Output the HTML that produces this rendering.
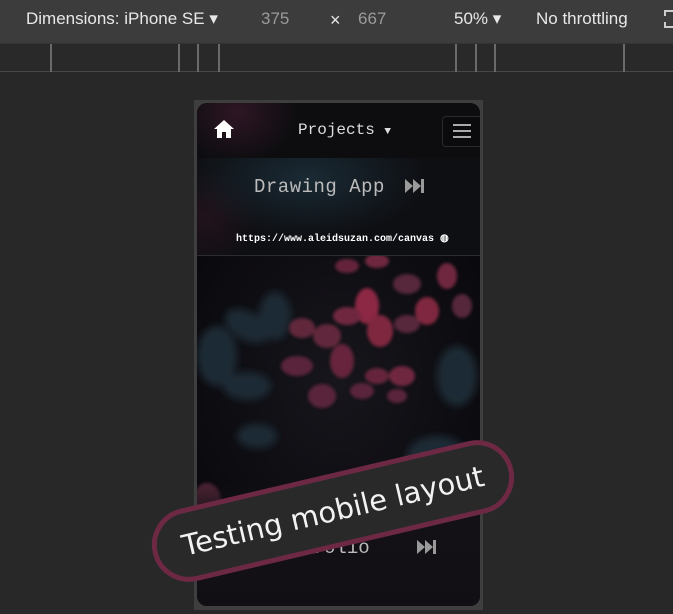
<!DOCTYPE html>
<html><head><meta charset="utf-8"><style>
*{margin:0;padding:0;box-sizing:border-box}
body{width:673px;height:614px;background:#282828;overflow:hidden;position:relative;font-family:"Liberation Sans",sans-serif}
.tb{position:absolute;left:0;top:0;width:673px;height:43px;background:#3c3c3c;color:#e8e8e8;font-size:17px}
.tb span{position:absolute;top:9px}
.ru{position:absolute;left:0;top:43px;width:673px;height:29px;background:#292929;border-top:1px solid #333;border-bottom:1px solid #474747}
.tk{position:absolute;top:0;width:2px;height:28px;background:#6a6a6a}
.frame{position:absolute;left:194px;top:100px;width:289px;height:510px;background:#3e3e3e}
.scr{position:absolute;left:197px;top:103px;width:283px;height:503px;border-radius:10px;overflow:hidden;background:#0b0a0e}
.mono{font-family:"Liberation Mono",monospace}
</style></head><body>
<div class="tb">
<span style="left:26px">Dimensions: iPhone SE ▾</span>
<span style="left:261px;color:#9a9a9a">375</span>
<span style="left:330px;font-size:18px;top:10px">×</span>
<span style="left:358px;color:#9a9a9a">667</span>
<span style="left:454px">50% ▾</span>
<span style="left:536px">No throttling</span>
<span style="left:664px;top:10px;width:12px;height:18px;border:2px dashed #ccc"></span>
</div>
<div class="ru">
<div class="tk" style="left:50px"></div><div class="tk" style="left:178px"></div><div class="tk" style="left:197px"></div><div class="tk" style="left:218px"></div>
<div class="tk" style="left:455px"></div><div class="tk" style="left:475px"></div><div class="tk" style="left:494px"></div><div class="tk" style="left:623px"></div>
</div>
<div class="frame"></div>
<div class="scr">
<div style="position:absolute;left:0;top:0;width:283px;height:55px;background:radial-gradient(ellipse 60px 50px at 40px 10px,#2e1624,transparent),#0d0d10"></div>
<div style="position:absolute;left:0;top:55px;width:283px;height:97px;background:radial-gradient(ellipse 120px 60px at 110px 20px,#1a2a34,transparent),radial-gradient(ellipse 50px 50px at 10px 60px,#22121c,transparent),#0e0f13"></div>
<svg style="position:absolute;left:16px;top:16px" width="22" height="20" viewBox="0 0 22 20"><path d="M11 1L1 10h3v9h5v-6h4v6h5v-9h3z" fill="#fff"/></svg>
<div style="position:absolute;left:101px;top:18px;color:#ddd;font-size:16px" class="mono">Projects <span style="font-size:11px">▼</span></div>
<div style="position:absolute;left:245px;top:13px;width:45px;height:31px;border:1px solid #2a2a2e;border-radius:4px;background:#0b0b0d"></div>
<div style="position:absolute;left:256px;top:21px;width:18px;height:2px;background:#aaa;box-shadow:0 6px 0 #aaa,0 12px 0 #aaa"></div>
<div class="mono" style="position:absolute;left:57px;top:73px;color:#bbb;font-size:19px;letter-spacing:0.5px">Drawing App</div>
<svg style="position:absolute;left:208px;top:76px" width="20" height="14" viewBox="0 0 20 14"><path d="M0 0l8 7-8 7zM8 0l8 7-8 7zM16 0h3v14h-3z" fill="#9a9a9a"/></svg>
<div class="mono" style="position:absolute;left:39px;top:130px;color:#fff;font-size:10px;font-weight:bold">https://www.aleidsuzan.com/canvas ◍</div>
<div style="position:absolute;left:0;top:152px;width:283px;height:1px;background:#2b2b30"></div>
<svg style="position:absolute;left:0;top:153px" width="283" height="350" viewBox="0 0 283 350">
<defs><radialGradient id="g" cx="0.5" cy="0.35" r="0.6"><stop offset="0" stop-color="#17161c"/><stop offset="1" stop-color="#0a090d"/></radialGradient><filter id="b"><feGaussianBlur stdDeviation="1.5"/></filter><filter id="b2"><feGaussianBlur stdDeviation="4"/></filter></defs>
<rect width="283" height="350" fill="url(#g)"/>
<g fill="#1f2c36" filter="url(#b2)"><ellipse cx="50" cy="70" rx="24" ry="14" transform="rotate(30 50 70)"/><ellipse cx="78" cy="60" rx="16" ry="24"/><ellipse cx="50" cy="130" rx="24" ry="14"/><ellipse cx="60" cy="180" rx="20" ry="12"/><ellipse cx="240" cy="200" rx="30" ry="20"/><ellipse cx="20" cy="100" rx="20" ry="30"/><ellipse cx="260" cy="120" rx="20" ry="30"/></g>
<g fill="#7a2a45" filter="url(#b)" opacity="0.9"><ellipse cx="170" cy="50" rx="12" ry="18" fill="#9a2b48"/><ellipse cx="150" cy="60" rx="14" ry="9"/><ellipse cx="183" cy="75" rx="13" ry="16" fill="#8c2a45"/><ellipse cx="130" cy="80" rx="14" ry="12" fill="#6a2a40"/><ellipse cx="105" cy="72" rx="13" ry="10" fill="#6a2a40"/><ellipse cx="145" cy="105" rx="12" ry="17" fill="#70283f"/><ellipse cx="100" cy="110" rx="16" ry="10" fill="#622840"/><ellipse cx="125" cy="140" rx="14" ry="12" fill="#622840"/><ellipse cx="180" cy="120" rx="12" ry="8" fill="#6e283f"/><ellipse cx="205" cy="120" rx="13" ry="10" fill="#7a2a45"/><ellipse cx="230" cy="55" rx="12" ry="14" fill="#8c2a45"/><ellipse cx="210" cy="68" rx="13" ry="9" fill="#5e2a40"/><ellipse cx="210" cy="28" rx="14" ry="10" fill="#5e2a40"/><ellipse cx="250" cy="20" rx="10" ry="13"/><ellipse cx="180" cy="5" rx="12" ry="7"/><ellipse cx="150" cy="10" rx="12" ry="7" fill="#6e283f"/><ellipse cx="265" cy="50" rx="10" ry="12" fill="#5e2a40"/><ellipse cx="200" cy="140" rx="10" ry="7" fill="#622840"/><ellipse cx="165" cy="135" rx="12" ry="8" fill="#622840"/><ellipse cx="10" cy="245" rx="14" ry="18" fill="#552538"/></g>
</svg>
<div style="position:absolute;left:0;top:380px;width:283px;height:123px;background:linear-gradient(#0b0a0e00,#131116 30%,#120f14)"></div>
<div class="mono" style="position:absolute;left:70px;top:434px;color:#bbb;font-size:19px">Portfolio</div>
<svg style="position:absolute;left:220px;top:437px" width="20" height="14" viewBox="0 0 20 14"><path d="M0 0l8 7-8 7zM8 0l8 7-8 7zM16 0h3v14h-3z" fill="#9a9a9a"/></svg>
</div>
<div style="position:absolute;left:148px;top:474px;width:370px;height:74px;border:5px solid #6d2944;border-radius:37px;background:#292929;transform:rotate(-13.2deg);color:#f2f2f2;font-family:'DejaVu Sans',sans-serif;font-size:29px;text-align:center;line-height:64px;white-space:nowrap">Testing mobile layout</div>
</body></html>
